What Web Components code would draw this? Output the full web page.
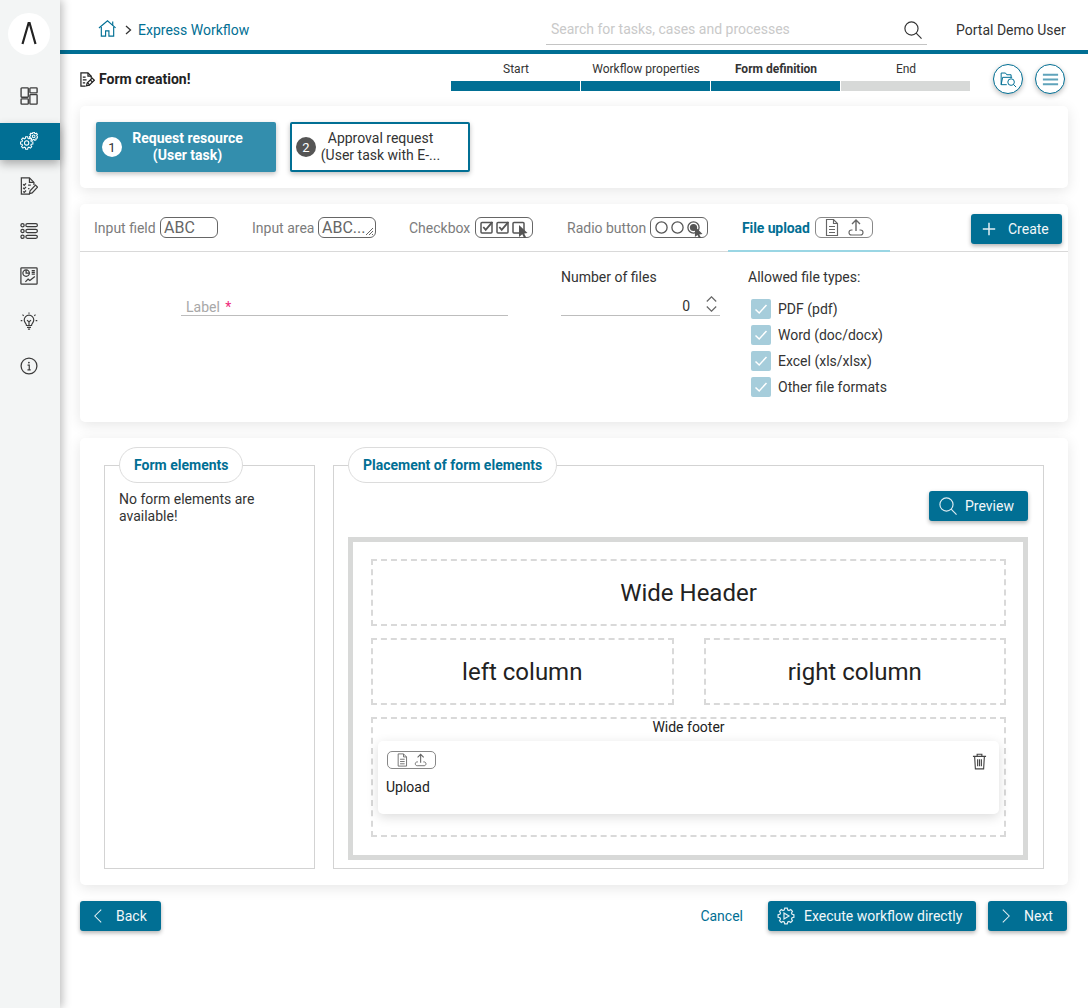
<!DOCTYPE html>
<html lang="en"><head><meta charset="utf-8"><title>Form creation</title>
<style>
html,body{margin:0;padding:0;background:#fff;font-family:Roboto,"Liberation Sans",sans-serif;font-size:14px;color:#222}
</style></head><body>
<x-app>
  <x-sidebar slot="side"></x-sidebar>
  <x-topbar></x-topbar>
  <x-wizard></x-wizard>
  <x-card style="padding:16px;margin-bottom:16px">
    <div style="display:flex;gap:14px">
      <x-task n="1" active><span>Request resource<br>(User task)</span></x-task>
      <x-task n="2"><span>Approval request<br>(User task with E-...</span></x-task>
    </div>
  </x-card>
  <x-card style="margin-bottom:16px;height:218px">
    <x-tabs></x-tabs>
    <x-upload-form></x-upload-form>
  </x-card>
  <x-card style="margin-bottom:16px">
    <x-designer></x-designer>
  </x-card>
  <x-actions></x-actions>
</x-app>
<script>
const TEAL='#016f94';
function gear(cx,cy,r,n,depth){
  let p=[];const step=Math.PI*2/n;
  for(let i=0;i<n;i++){
    const a=i*step-Math.PI/2;
    const pts=[[a-step*.36,r-depth],[a-step*.2,r],[a+step*.2,r],[a+step*.36,r-depth]];
    for(const [t,q] of pts)p.push((cx+q*Math.cos(t)).toFixed(2)+' '+(cy+q*Math.sin(t)).toFixed(2));
  }
  return 'M'+p.join('L')+'Z';
}
const ICONS={
 logo:['0 0 42 42','<path d="M14.5 31 20.6 10h1L27.5 31" fill="none" stroke="#222" stroke-width="2.2"/>'],
 dash:['0 0 20 20','<g fill="none" stroke="#3c3c3c" stroke-width="1.5"><rect x="1.2" y="1" width="8" height="10.400" rx=".8"/><rect x="1.2" y="13.200" width="8" height="5.800" rx=".8"/><rect x="11" y="1" width="8" height="5.600" rx=".8"/><rect x="11" y="8.400" width="8" height="10.600" rx=".8"/></g>'],
 gears:['0 0 20 20',`<g fill="none" stroke="#fff" stroke-width="1.15"><path d="${gear(7.4,12.2,7,8,1.7)}"/><circle cx="7.4" cy="12.2" r="2.4"/><path d="${gear(15.2,4.8,4.7,7,1.2)}"/><circle cx="15.2" cy="4.800" r="1.500"/></g>`],
 form:['0 0 20 20','<g fill="none" stroke="#3c3c3c" stroke-width="1.35"><path d="M11 19H1.500V1h9l5 5v3"/><path d="M10.500 1v5h5"/><path d="m3.500 8 1.200 1.200 2-2.200M3.500 12l1.200 1.200 2-2.200M3.500 16l1.200 1.200 2-2.200M9 9h3M9 13h1.500"/><path d="m10.500 18.500.7-3.200 6-6.300 2.300 2.300-6 6.400z"/></g>'],
 list:['0 0 20 20','<g fill="none" stroke="#3c3c3c" stroke-width="1.4"><circle cx="2.800" cy="3.500" r="1.800"/><circle cx="2.800" cy="10" r="1.800"/><circle cx="2.800" cy="16.500" r="1.800"/><rect x="6.500" y="1.800" width="12.800" height="3.400" rx="1.700"/><rect x="6.500" y="8.300" width="12.800" height="3.400" rx="1.700"/><rect x="6.500" y="14.800" width="12.800" height="3.400" rx="1.700"/></g>'],
 chart:['0 0 20 20','<g fill="none" stroke="#3c3c3c" stroke-width="1.4"><rect x="1" y="1" width="18" height="18" rx=".8"/><circle cx="6.800" cy="6.800" r="3.600"/><path d="M6.800 3.200v3.600h3.600"/><path d="M13 4h3.500M13 6h3.500M13 8h3.500" stroke-width="1.300"/><path d="m6 16.500 3-3 2 1.500 5.500-4.500"/></g>'],
 bulb:['0 0 20 20','<g fill="none" stroke="#3c3c3c" stroke-width="1.3"><path d="M7.200 15c0-2.500-2.500-3-2.500-6.200a5.300 5.300 0 0 1 10.600 0C15.300 12 12.800 12.500 12.800 15z"/><path d="M7.800 17h4.400M8.800 19h2.400"/><path d="m7.800 9 2.200 2 2.200-2M10 11v4"/><path d="M10 .6V2M2.800 3l1.300 1.300M17.200 3l-1.300 1.300M.8 9.500h1.800M17.400 9.500h1.800"/></g>'],
 info:['0 0 20 20','<g fill="none" stroke="#3c3c3c" stroke-width="1.4"><circle cx="10" cy="10" r="8.800"/><path d="M8.400 9h1.900v5.200M8.300 14.300h3.600" stroke-width="1.300"/></g><circle cx="9.900" cy="6.200" r="1" fill="#3c3c3c"/>'],
 home:['0 0 20 20',`<g fill="none" stroke="${TEAL}" stroke-width="1.200"><path d="M1 9.500 10 1.800l8.500 7.500"/><path d="M15.500 2.500v4"/><path d="M3.500 8.500V18H8v-5.500h3.500V18h5V8.500"/></g>`],
 search:['0 0 20 20','<g fill="none" stroke="#333" stroke-width="1.300"><circle cx="8.300" cy="8.300" r="7.300"/><path d="m13.500 13.500 6 6"/></g>'],
 searchw:['0 0 20 20','<g fill="none" stroke="#dcebf1" stroke-width="1.300"><circle cx="8.300" cy="8.300" r="7.300"/><path d="m13.500 13.500 6 6"/></g>'],
 edit:['0 0 16 16','<g fill="none" stroke="#222" stroke-width="1.300"><path d="M6 15H1V1h7.500L12 4.500V7"/><path d="M8.500 1v3.500H12"/><path d="M3 5.500h3M3 8.500h4M3 11.500h2.500"/><path d="M7 14.700l.6-3 5.400-5.200 2.300 2.300-5.400 5.200z" fill="#fff"/><path d="m8 11.500 2.500 2.500M11 8.500l2.300 2.300"/></g>'],
 folder:['0 0 22 22',`<g fill="none" stroke="${TEAL}" stroke-width="1.150"><path d="M9 17H2.500V3.500H7.500l1.500 2h5v3"/><path d="M2.500 17 4.200 8.500h11"/><circle cx="14" cy="14" r="3.800"/><path d="m16.800 16.800 3 3"/></g>`],
 menu:['0 0 20 20','<path d="M2 5h16M2 10h16M2 15h16" fill="none" stroke="#5fa3bb" stroke-width="2"/>'],
 plus:['0 0 14 14','<path d="M7 .8v12.400M.8 7h12.400" fill="none" stroke="#e4eff3" stroke-width="1.500"/>'],
 left:['0 0 12 20','<path d="M10 2 2 10l8 8" fill="none" stroke="#e4eff3" stroke-width="1.300"/>'],
 right:['0 0 12 20','<path d="m2 2 8 8-8 8" fill="none" stroke="#e4eff3" stroke-width="1.300"/>'],
 exec:['0 0 18 18',`<g fill="none" stroke="#e4eff3" stroke-width="1.200"><path d="${gear(9,9,8,8,1.700)}"/><path d="M7 6l5 3-5 3z"/></g>`],
 trash:['0 0 16 18','<g fill="none" stroke="#444" stroke-width="1.200"><path d="M1 3.500h14M5.500 3.500V1.200h5v2.300M2.800 3.500l.8 13.300h8.800l.8-13.300M6 6.500v7.500M8 6.500v7.500M10 6.500v7.500"/></g>'],
 chevup:['0 0 11 6','<path d="m.8 5.500 4.700-4.700 4.700 4.700" fill="none" stroke="#666" stroke-width="1.200"/>'],
 chevdn:['0 0 11 6','<path d="m.8.500 4.700 4.700L10.200.500" fill="none" stroke="#666" stroke-width="1.200"/>'],
 crumb:['0 0 8 10','<path d="m1.500 1 4.500 4-4.500 4" fill="none" stroke="#333" stroke-width="1.300"/>'],
 check:['0 0 20 20','<path d="m4.500 10.500 3.700 3.500 7.300-8" fill="none" stroke="#fff" stroke-width="1.500"/>'],
 pcheck:['0 0 58 21','<g fill="none" stroke="#555" stroke-width="1.500"><rect x="6" y="5.500" width="11" height="10.500" rx="1"/><path d="m8.300 10 2.400 2.800 6.800-8" stroke-width="1.800"/><rect x="22" y="5.500" width="11" height="10.500" rx="1"/><path d="m24.300 10 2.400 2.800 6.800-8" stroke-width="1.800"/><rect x="38" y="5.500" width="11" height="10.500" rx="1"/></g><path d="m44 8 8.500 8-3.300.5 2 4-2 .8-1.900-4-3.300 2.600z" fill="#555"/>'],
 pradio:['0 0 58 21','<g fill="none" stroke="#555" stroke-width="1.300"><circle cx="11.500" cy="10.500" r="5.600"/><circle cx="27.500" cy="10.500" r="5.600"/><circle cx="43.500" cy="10.500" r="5.600"/></g><circle cx="43.500" cy="10.500" r="3.600" fill="#555"/><path d="m45 9.500 7.500 7.500-3.300.4 1.900 3.400-1.900.7-1.700-3.600-2.600 2.200z" fill="#555"/>'],
 pfile:['0 0 58 21','<g fill="none" stroke="#666" stroke-width="1.150"><path d="M11.500 2.500h7l4 4v12h-11z"/><path d="M18.500 2.500v4h4M14 9.500h6M14 12.500h6M14 15.500h6"/><path d="M41 14V3.500M37 7l4-4 4 4" stroke-width="1.400"/><path d="M37.500 13h-1c-1.500 0-2.500 1-2.500 2.500s1 2.500 2.500 2.500h9c1.500 0 2.500-1 2.500-2.500S47 13 45.500 13h-1"/></g>'],
 resize:['0 0 10 10','<path d="M9 2 2 9M9 5 5 9M9 8 8 9" fill="none" stroke="#666" stroke-width="1"/>']
};
function define(name,css,html){
  customElements.define(name,class extends HTMLElement{
    connectedCallback(){
      if(this.shadowRoot)return;
      const s=this.attachShadow({mode:'open'});
      s.innerHTML=`<style>${css}</style>`+(typeof html==='function'?html(this):html);
    }
  });
}
define('x-icon',':host{display:inline-flex;flex:none;line-height:0}svg{display:block;width:100%;height:100%}',
  h=>{const [vb,m]=ICONS[h.getAttribute('name')];return `<svg viewBox="${vb}" xmlns="http://www.w3.org/2000/svg">${m}</svg>`});
define('x-app',`:host{display:flex;min-height:1008px;width:1088px;overflow:hidden}
 .main{flex:1;min-width:0;display:flex;flex-direction:column}
 .content{padding:0 20px 0 20px;display:flex;flex-direction:column}
 ::slotted(x-topbar){margin:0 -20px}`,
 `<slot name="side"></slot><div class="main"><div class="content"><slot></slot></div></div>`);
define('x-sidebar',`:host{display:flex;flex-direction:column;align-items:stretch;width:60px;background:#f3f5f5;box-shadow:2px 0 9px rgba(0,0,0,.28);position:relative;z-index:2;flex:none}
 .logo{width:42px;height:42px;border-radius:50%;background:#fff;margin:13px 0 23px 8px}
 .logo x-icon{width:42px;height:42px}
 .items{display:flex;flex-direction:column;gap:8px}
 .i{height:37px;box-sizing:border-box;padding:0 0 2px 20px;display:flex;align-items:center}
 .i x-icon{width:18px;height:18px}
 .i.on{background:${TEAL};box-shadow:0 4px 9px rgba(0,0,0,.3)}`,
 `<div class="logo"><x-icon name="logo"></x-icon></div><div class="items">
 <div class="i"><x-icon name="dash"></x-icon></div>
 <div class="i on"><x-icon name="gears"></x-icon></div>
 <div class="i"><x-icon name="form"></x-icon></div>
 <div class="i"><x-icon name="list"></x-icon></div>
 <div class="i"><x-icon name="chart"></x-icon></div>
 <div class="i"><x-icon name="bulb"></x-icon></div>
 <div class="i"><x-icon name="info"></x-icon></div></div>`);
define('x-topbar',`:host{display:flex;align-items:center;height:40px;padding-top:10px;border-bottom:4px solid ${TEAL};background:#fff;box-sizing:content-box;padding-left:38px;color:#333}
 .home{width:19px;height:19px;margin-top:-4px;margin-right:7px}
 .cr{width:9px;height:10px;margin-right:5px}
 a{color:${TEAL};line-height:20px;margin-right:297px;white-space:nowrap;width:111px}
 .s{width:381px;height:30px;box-sizing:border-box;margin-top:-1px;padding:0 5px;border-bottom:1px solid #c4c4c4;display:flex;align-items:center;justify-content:space-between;color:#c9c9c9}
 .s x-icon{width:18px;height:18px;margin-top:2px}
 .u{margin-left:29px;white-space:nowrap;color:#333}`,
 `<x-icon class="home" name="home"></x-icon><x-icon class="cr" name="crumb"></x-icon><a>Express Workflow</a>
 <div class="s"><span>Search for tasks, cases and processes</span><x-icon name="search"></x-icon></div><span class="u">Portal Demo User</span>`);
define('x-wizard',`:host{display:flex;height:52px;align-items:flex-start}
 .t{display:flex;align-items:center;gap:4px;font-weight:700;font-size:14px;color:#222;width:371px;padding-top:16px;line-height:18px}
 .t x-icon{width:15px;height:15px}
 .steps{display:grid;grid-template-columns:repeat(4,129px);gap:1px;width:519px}
 .st{font-size:12px;text-align:center;color:#333;padding-top:8px}
 .st b{font-weight:700}
 .st i{display:block;height:10px;background:${TEAL};margin-top:5px}
 .st.off i{background:#d7d9d8}
 .st span{display:block;line-height:14px;padding-left:1px}
 .rb{display:flex;gap:12px;margin-left:23px;margin-top:10px}
 .r{width:30px;height:30px;border-radius:50%;box-sizing:border-box;border:1px solid ${TEAL};background:#fff;display:flex;align-items:center;justify-content:center;box-shadow:0 2px 5px rgba(0,0,0,.25)}
 .r x-icon{width:19px;height:19px}`,
 `<div class="t"><x-icon name="edit"></x-icon>Form creation!</div>
 <div class="steps"><div class="st"><span>Start</span><i></i></div><div class="st"><span>Workflow properties</span><i></i></div><div class="st"><span><b>Form definition</b></span><i></i></div><div class="st off"><span>End</span><i></i></div></div>
 <div class="rb"><div class="r"><x-icon name="folder"></x-icon></div><div class="r"><x-icon name="menu"></x-icon></div></div>`);
define('x-card',`:host{display:block;background:#fff;border-radius:5px;box-shadow:0 3px 14px rgba(0,0,0,.1);box-sizing:border-box}`,`<slot></slot>`);
define('x-task',`:host{display:flex;align-items:center;width:180px;height:50px;box-sizing:border-box;border-radius:2px;border:2px solid ${TEAL};background:#fff;color:#333;padding-left:4px;box-shadow:0 2px 5px rgba(0,0,0,.25);line-height:17px}
 :host([active]){background:#338ead;border-color:#338ead;color:#fff;font-weight:700}
 .n{width:20px;height:20px;border-radius:50%;background:#555;color:#fff;display:flex;align-items:center;justify-content:center;flex:none;font-size:13px;font-weight:400}
 :host([active]) .n{background:#fff;color:#333}
 .x{flex:1;text-align:center;padding:0 27px 0 4px;white-space:nowrap}
 :host([active]) .x{padding-right:25px}`,
 h=>`<span class="n">${h.getAttribute('n')}</span><div class="x"><slot></slot></div>`);
define('x-pill',`:host{display:inline-flex;align-items:center;width:58px;height:21px;box-sizing:border-box;border:1px solid #666;border-radius:6px;color:#666;font-size:16px;padding-left:3px;position:relative;flex:none;line-height:19px}
 x-icon{position:absolute;left:-1px;top:-1px;width:58px;height:21px}
 .rs{position:absolute;right:1px;bottom:1px;width:10px;height:10px;left:auto;top:auto}`,
 h=>{const n=h.getAttribute('icon');const t=h.getAttribute('text')||'';return (n?`<x-icon name="${n}"></x-icon>`:'')+`<span>${t}</span>`+(h.hasAttribute('rs')?'<x-icon class="rs" name="resize"></x-icon>':'');});
define('x-btn',`:host{display:inline-flex;align-items:center;height:30px;box-sizing:border-box;background:${TEAL};color:#f2f7f9;border-radius:3px;box-shadow:0 2px 4px rgba(0,0,0,.3);white-space:nowrap;font-weight:400;flex:none}
 x-icon{flex:none}`,
 h=>{const s=h.getAttribute('sz')||'14,14';const [w,ht]=s.split(',');return `<x-icon name="${h.getAttribute('icon')}" style="width:${w}px;height:${ht}px;margin-left:${h.getAttribute('ml')||12}px;margin-right:${h.getAttribute('mr')||12}px"></x-icon><span><slot></slot></span>`});
define('x-tabs',`:host{display:flex;height:48px;border-bottom:1px solid #d9d9d9;box-sizing:border-box;align-items:stretch}
 .t{display:flex;flex:none;align-items:center;justify-content:space-between;padding:0 14px;margin-right:6px;color:#7c7c7c;height:47px;box-sizing:border-box;white-space:nowrap}
 .t.on{color:${TEAL};font-weight:700;border-bottom:2px solid #9ad6e4;padding-right:17px;margin:0;padding-top:1px;height:48px;letter-spacing:-.1px}
 .t.on x-pill{border-color:#888}
 x-btn{align-self:flex-start;margin:10px 6px 0 auto}`,
 `<div class="t" style="width:152px">Input field<x-pill text="ABC"></x-pill></div>
 <div class="t" style="width:152px;margin-right:5px">Input area<x-pill text="ABC..." rs></x-pill></div>
 <div class="t" style="width:152px">Checkbox<x-pill icon="pcheck"></x-pill></div>
 <div class="t" style="width:169px">Radio button<x-pill icon="pradio"></x-pill></div>
 <div class="t on" style="width:162px">File upload<x-pill icon="pfile"></x-pill></div>
 <x-btn icon="plus" sz="14,14" ml="11" mr="12" style="width:91px">Create</x-btn>`);
define('x-upload-form',`:host{display:grid;grid-template-columns:327px 159px 1fr;column-gap:53px;padding:16px 0 0 101px;color:#333}
 .f{grid-column:1;height:48px;display:flex;align-items:flex-end}
 .u{width:100%;height:22px;border-bottom:1px solid #bdbdbd;color:#a8a8a8;box-sizing:border-box;padding:5px 5px 0;line-height:16px;font-size:14px}
 .u em{color:#ee2a7b;font-style:normal;margin-left:2px}
 .num{display:flex;flex-direction:column}
 .lb{line-height:18px}
 .v{display:flex;align-items:flex-end;justify-content:flex-end;height:30px;border-bottom:1px solid #bdbdbd;box-sizing:border-box;padding:0 3px 0 0;line-height:18px}
 .v .sp{display:flex;flex-direction:column;gap:4px;margin-left:16px;margin-bottom:3px}
 .sp x-icon{width:11px;height:6px}
 .al{margin-left:-25px}
 .c{display:flex;align-items:center;height:26px;margin-left:3px;gap:7px}
 .cb{width:20px;height:20px;border-radius:2px;background:#a6cddb;display:block}
 .cb x-icon{width:20px;height:20px}
 .cl{margin-top:10px}`,
 `<div class="f"><div class="u">Label <em>*</em></div></div>
 <div class="num"><div class="lb">Number of files</div><div class="v"><span>0</span><div class="sp"><x-icon name="chevup"></x-icon><x-icon name="chevdn"></x-icon></div></div></div>
 <div class="al"><div class="lb">Allowed file types:</div><div class="cl">
 <div class="c"><span class="cb"><x-icon name="check"></x-icon></span>PDF (pdf)</div>
 <div class="c"><span class="cb"><x-icon name="check"></x-icon></span>Word (doc/docx)</div>
 <div class="c"><span class="cb"><x-icon name="check"></x-icon></span>Excel (xls/xlsx)</div>
 <div class="c"><span class="cb"><x-icon name="check"></x-icon></span>Other file formats</div></div></div>`);
define('x-designer',`:host{display:grid;grid-template-columns:211px 711px;column-gap:18px;padding:27px 24px 16px}
 .fs{border:1px solid #d3d3d3;box-sizing:border-box;height:404px;padding:0 14px}
 .pill{display:inline-block;height:36px;line-height:34px;box-sizing:border-box;border:1px solid #dcdcdc;border-radius:18px;padding:0 14px;color:${TEAL};font-weight:700;background:#fff;margin:-19px 0 0 0;vertical-align:top}
 .txt{margin-top:8px;line-height:17px;color:#333;width:170px}
 .bar{display:flex;justify-content:flex-end;margin-top:8px}
 x-layout{margin-top:16px}`,
 `<div class="fs"><div class="pill">Form elements</div><div class="txt">No form elements are available!</div></div>
 <div class="fs" style="padding-right:15px"><div class="pill">Placement of form elements</div>
 <div class="bar"><x-btn icon="searchw" sz="18,18" ml="10" mr="8" style="width:99px">Preview</x-btn></div>
 <x-layout></x-layout></div>`);
define('x-layout',`:host{display:flex;flex-direction:column;gap:12px;height:323px;box-sizing:border-box;border:5px solid #d8d9d8;padding:17px 17px 18px 18px;color:#222;margin-top:15px}
 .z{border:2px dashed #d9d9d9;box-sizing:border-box;display:flex;align-items:center;justify-content:center;font-size:24px;height:67px;flex:none}
 .row{display:flex;gap:30px}
 .row .z{flex:1}
 .ft{flex:1;border:2px dashed #d9d9d9;box-sizing:border-box;padding:0 5px;display:flex;flex-direction:column}
 .lbl{text-align:center;height:22px;line-height:16px}
 .el{height:73px;background:#fff;border-radius:5px;box-shadow:0 3px 12px rgba(0,0,0,.14);padding:10px 11px 0 9px;box-sizing:border-box}
 .tp{display:flex;justify-content:space-between;align-items:flex-start}
 .tr{width:15px;height:17px;margin-right:1px;margin-top:2px}
 .el p{margin:8px 0 0 -1px;line-height:18px;color:#222}
 x-icon.pi{width:49px;height:18px;border:1px solid #888;border-radius:5px;box-sizing:border-box}`,
 `<div class="z">Wide Header</div>
 <div class="row"><div class="z">left column</div><div class="z">right column</div></div>
 <div class="ft"><div class="lbl">Wide footer</div>
 <div class="el"><div class="tp"><x-icon class="pi" name="pfile"></x-icon><x-icon class="tr" name="trash"></x-icon></div><p>Upload</p></div></div>`);
define('x-actions',`:host{display:flex;align-items:center;width:987px}
 a{color:${TEAL};margin-left:auto;margin-right:25px}
 .g{margin-left:12px}`,
 `<x-btn icon="left" sz="10,16" ml="13" mr="13" style="width:81px">Back</x-btn>
 <a>Cancel</a>
 <x-btn icon="exec" sz="18,18" ml="9" mr="9" style="width:208px">Execute workflow directly</x-btn>
 <x-btn class="g" icon="right" sz="10,16" ml="13" mr="13" style="width:79px">Next</x-btn>`);
</script>
</body></html>
